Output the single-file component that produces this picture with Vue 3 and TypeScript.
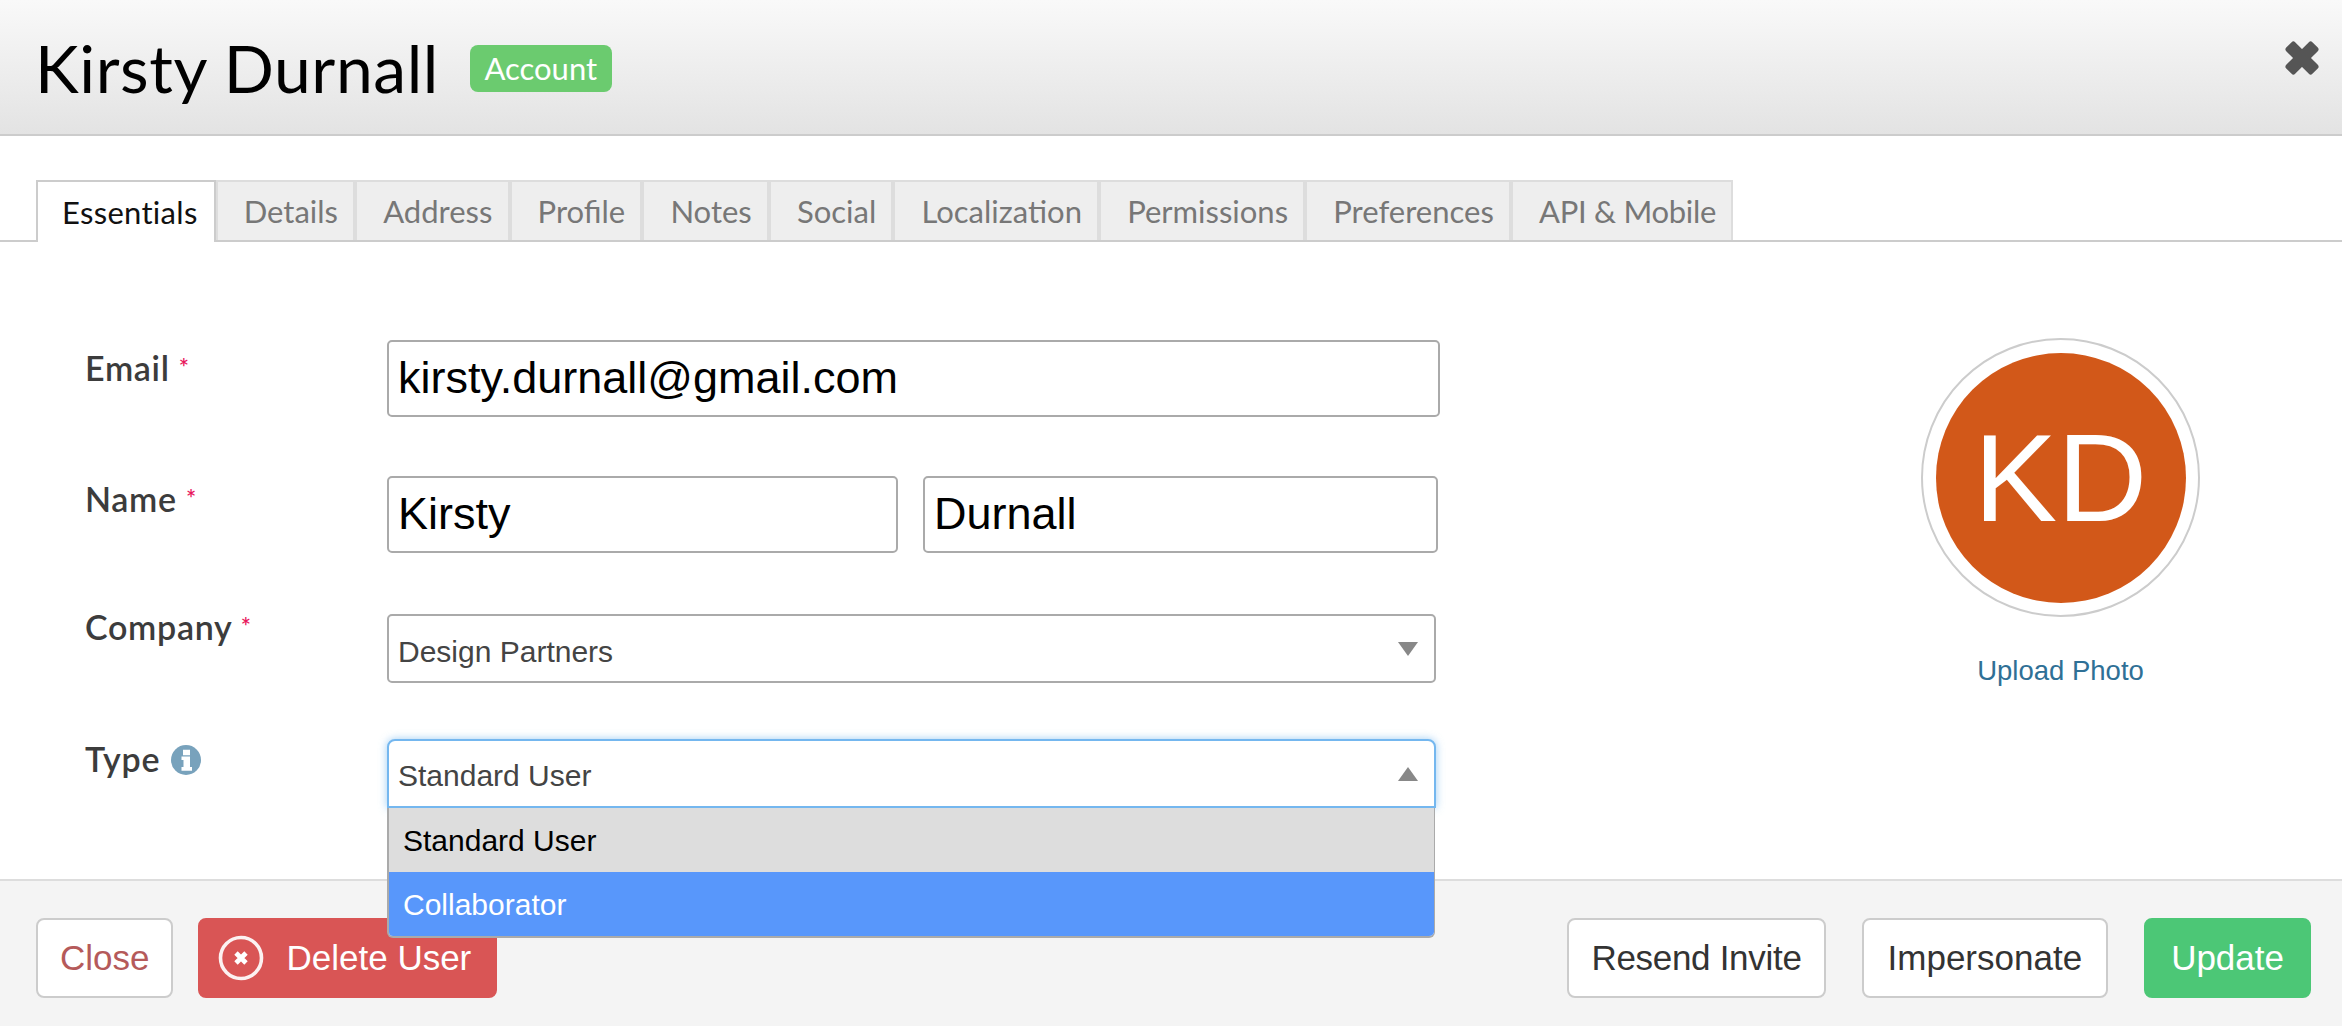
<script setup lang="ts">
const tabs = ['Essentials', 'Details', 'Address', 'Profile', 'Notes', 'Social', 'Localization', 'Permissions', 'Preferences', 'API & Mobile']
const typeOptions = ['Standard User', 'Collaborator']
</script>

<template>
  <div class="modal">
    <header class="head">
      <h1>Kirsty Durnall</h1>
      <span class="badge">Account</span>
      <svg class="close-x" width="36" height="36" viewBox="0 0 36 36">
        <g fill="#555" transform="rotate(45 18 18)">
          <rect x="-0.5" y="11.7" width="37" height="12.6" rx="2.5" />
          <rect x="11.7" y="-0.5" width="12.6" height="37" rx="2.5" />
        </g>
      </svg>
    </header>

    <nav class="tabs">
      <a v-for="(t, i) in tabs" :key="t" class="tab" :class="{ active: i === 0 }">{{ t }}</a>
    </nav>

    <main class="body">
      <form class="form">
        <div class="row row-email">
          <label>Email <i>*</i></label>
          <input class="text wide" value="kirsty.durnall@gmail.com" />
        </div>
        <div class="row row-name">
          <label>Name <i>*</i></label>
          <div class="pair">
            <input class="text" value="Kirsty" />
            <input class="text" value="Durnall" />
          </div>
        </div>
        <div class="row row-company">
          <label>Company <i>*</i></label>
          <div class="select">
            <span>Design Partners</span>
            <b class="caret down"></b>
          </div>
        </div>
        <div class="row row-type">
          <label>Type
            <svg class="info" width="30" height="30" viewBox="0 0 30 30">
              <circle cx="15" cy="15" r="15" fill="#78a2bc" />
              <path d="M12 4.8h7v5.5h-7zM10.5 11.5h8.5v10.5h2v3.7H10.5V22h2v-7h-2z" fill="#fff" />
            </svg>
          </label>
          <div class="select open">
            <span>Standard User</span>
            <b class="caret up"></b>
            <ul class="menu">
              <li v-for="(o, i) in typeOptions" :key="o" :class="i === 0 ? 'current' : 'hover'">{{ o }}</li>
            </ul>
          </div>
        </div>
      </form>

      <aside class="photo">
        <div class="ring"><div class="avatar">KD</div></div>
        <a class="upload">Upload Photo</a>
      </aside>
    </main>

    <footer class="foot">
      <button class="btn close">Close</button>
      <button class="btn danger">
        <svg width="46" height="46" viewBox="0 0 46 46">
          <circle cx="23" cy="23" r="20.5" fill="none" stroke="#fff" stroke-opacity="0.92" stroke-width="3.6" />
          <path d="M18 18l10 10M28 18L18 28" stroke="#fff" stroke-width="4.8" />
        </svg>
        Delete User
      </button>
      <div class="right">
        <button class="btn plain resend">Resend Invite</button>
        <button class="btn plain">Impersonate</button>
        <button class="btn ok">Update</button>
      </div>
    </footer>
  </div>
</template>

<style>
html, body {
  margin: 0;
  background: #fff;
}
</style>

<style scoped>
.modal {
  display: flex;
  flex-direction: column;
  height: 1026px;
  overflow: hidden;
  font-family: Lato, "Open Sans", sans-serif;
}
.head {
  display: flex;
  align-items: center;
  flex: none;
  height: 134px;
  padding: 0 22px 0 35px;
  border-bottom: 2px solid #ccc;
  background: linear-gradient(#f9f9f9, #e3e3e3);
}
.head h1 {
  margin: 0;
  font-size: 66px;
  font-weight: 400;
  letter-spacing: 0.55px;
  color: #000;
}
.badge {
  margin: 0 0 -2px 31px;
  padding: 0 14.5px;
  height: 47px;
  line-height: 47px;
  border-radius: 8px;
  background: #6bcb6f;
  color: #fff;
  font-size: 31px;
}
.close-x {
  margin-left: auto;
  margin-top: -18px;
}
.tabs {
  display: flex;
  flex: none;
  height: 60px;
  margin-top: 44px;
  padding-left: 36px;
  border-bottom: 2px solid #ccc;
}
.tab {
  display: flex;
  align-items: center;
  box-sizing: border-box;
  height: 60px;
  padding: 0 15.2px 0 26px;
  border: 2px solid #ddd;
  border-width: 2px 2px 0 2px;
  background: #eee;
  color: #777;
  font-size: 31px;
}
.tab:last-child {
  letter-spacing: -0.3px;
}
.tab.active {
  height: 62px;
  padding: 0 16px 0 24px;
  border-color: #ccc;
  background: #fff;
  color: #111;
  letter-spacing: 0.3px;
}
.body {
  position: relative;
  display: flex;
  flex: 1;
  padding: 98px 0 0 85px;
}
.form {
  width: 1355px;
}
.row {
  display: flex;
}
.row label {
  width: 302px;
  flex: none;
  font-size: 34px;
  font-weight: 600;
  letter-spacing: 0.7px;
  color: #3c3c3c;
}
.row label i {
  font-style: normal;
  font-size: 24px;
  color: #e8175d;
  vertical-align: 4px;
}
.row-email { height: 136px; }
.row-name { height: 138px; }
.row-company { height: 125px; }
.row-email label { padding-top: 7px; }
.row-name label { padding-top: 2px; }
.row-company label { margin-top: -8px; }
.row-type label { margin-top: -1px; }
.info {
  vertical-align: -3px;
  margin-left: 2px;
}
.text {
  display: block;
  box-sizing: border-box;
  height: 77px;
  padding: 0 9px 2px;
  border: 2px solid #aaa;
  border-radius: 5px;
  outline: none;
  font: 45px "Liberation Sans", Arial, sans-serif;
  color: #000;
}
.wide {
  width: 1053px;
}
.pair {
  display: flex;
  gap: 25px;
}
.pair .text {
  width: 511px;
}
.pair .text + .text {
  width: 515px;
}
.select {
  position: relative;
  box-sizing: border-box;
  display: flex;
  align-items: center;
  width: 1049px;
  height: 69px;
  padding: 6px 9px 0;
  border: 2px solid #aaa;
  border-radius: 5px;
  background: #fff;
  font: 30px "Liberation Sans", Arial, sans-serif;
  color: #444;
}
.select.open {
  padding-top: 4px;
  border-color: #74b7ef;
  border-radius: 8px 8px 0 0;
  box-shadow: 0 0 9px rgba(116, 183, 239, 0.7);
}
.caret {
  position: absolute;
  right: 16px;
  top: 26px;
  width: 0;
  height: 0;
  border-left: 10px solid transparent;
  border-right: 10px solid transparent;
}
.caret.down {
  border-top: 14px solid #888;
}
.caret.up {
  border-bottom: 14px solid #888;
}
.menu {
  position: absolute;
  z-index: 2;
  left: -2px;
  right: -1px;
  top: 67px;
  margin: 0;
  padding: 0;
  list-style: none;
  overflow: hidden;
  border: 2px solid #aaa;
  border-top: 0;
  border-right-width: 1px;
  border-radius: 0 0 6px 6px;
  background: #fff;
}
.menu li {
  box-sizing: border-box;
  height: 64px;
  line-height: 66px;
  padding: 0 14px;
}
.menu .current {
  background: #ddd;
  color: #000;
}
.menu .hover {
  background: #5897fb;
  color: #fff;
}
.photo {
  display: flex;
  flex-direction: column;
  align-items: center;
  margin-left: 481px;
  margin-top: -2px;
}
.ring {
  box-sizing: border-box;
  display: flex;
  align-items: center;
  justify-content: center;
  width: 279px;
  height: 279px;
  border: 2px solid #ccc;
  border-radius: 50%;
}
.avatar {
  width: 250px;
  height: 250px;
  border-radius: 50%;
  background: #d25819;
  color: #fff;
  text-align: center;
  font: 125px/250px "Liberation Sans", Arial, sans-serif;
}
.upload {
  margin-top: 38px;
  color: #2f7096;
  font: 27.5px "Liberation Sans", Arial, sans-serif;
}
.foot {
  display: flex;
  align-items: center;
  flex: none;
  height: 147px;
  box-sizing: border-box;
  padding: 9px 31px 0 36px;
  border-top: 2px solid #ddd;
  background: #f4f4f4;
  gap: 25px;
}
.right {
  display: flex;
  gap: 36px;
  margin-left: auto;
}
.btn {
  box-sizing: border-box;
  height: 80px;
  padding: 0 24px;
  border-radius: 8px;
  border: 2px solid #ccc;
  background: #fff;
  font: 35px "Liberation Sans", Arial, sans-serif;
  color: #333;
}
.btn.close {
  padding: 0 22px;
  color: #b55a5a;
}
.btn.resend {
  padding: 0 22px;
  letter-spacing: -0.3px;
}
.btn.danger {
  display: flex;
  align-items: center;
  gap: 22px;
  padding: 0 24px 0 18px;
  border-color: #d95555;
  background: #d95555;
  color: #fff;
}
.btn.ok {
  padding: 0 25px;
  border-color: #4cc776;
  background: #4cc776;
  color: #fff;
}
</style>
